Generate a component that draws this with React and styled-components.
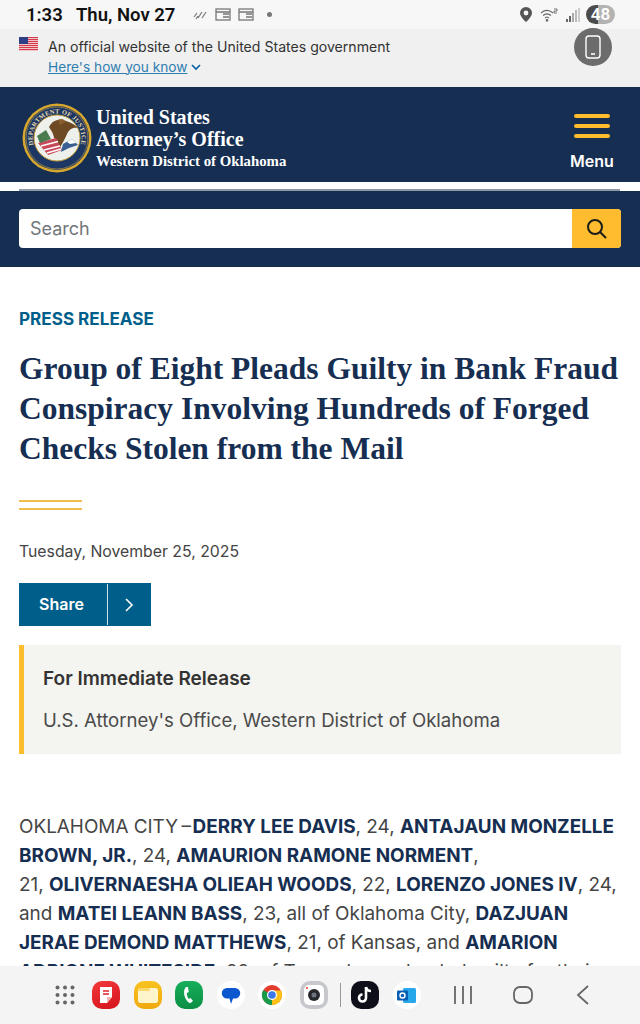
import React from "react";
import styled, { createGlobalStyle } from "styled-components";

const Global = createGlobalStyle`
  html, body { margin: 0; padding: 0; background: #fff; }
  body { width: 640px; height: 1024px; overflow: hidden; font-family: Inter, "Liberation Sans", sans-serif; }
  * { box-sizing: border-box; }
`;
const Page = styled.div`position: relative; width: 640px; height: 1024px; overflow: hidden; background: #fff;`;

const StatusBar = styled.div`
  height: 29px; background: #f7f7f7; display: flex; align-items: center; padding: 0 25px 0 26px; color: #111;
  font-family: Roboto, Inter, sans-serif; font-weight: 600; font-size: 18.5px;
`;
const StatusTime = styled.span`width: 50px;`;
const StatusDate = styled.span`width: 117px;`;
const StatusIcons = styled.div`display: flex; align-items: center; gap: 7px; color: #777;`;
const Spacer = styled.div`flex: 1;`;
const Battery = styled.div`
  width: 29px; height: 19px; border-radius: 10px; background: linear-gradient(90deg, #4b4b4b 0 40%, #b3b3b3 40% 100%);
  color: #fff; font-size: 17px; font-weight: 600; text-align: center; line-height: 19px;
`;
const StatusRight = styled.div`display: flex; align-items: center; gap: 6px;`;

const GovBanner = styled.div`
  height: 58px; background: #f0f0f0; display: flex; padding: 7px 0 0 19px; gap: 10px;
  font-family: Inter, sans-serif; font-size: 14.1px; color: #333; line-height: 22px;
`;
const GovText = styled.div`display: flex; flex-direction: column;`;
const GovLink = styled.a`color: #2f7fb0; font-size: 13.7px; line-height: 19px; text-decoration: underline; display: flex; align-items: center; gap: 4px; text-decoration-thickness: 1px;`;
const Floating = styled.div`
  position: absolute; left: 574px; top: 28px; width: 38px; height: 38px; border-radius: 50%; background: #6c6c6c;
  display: flex; align-items: center; justify-content: center;
`;

const Header = styled.header`height: 95px; background: #162e51; display: flex; align-items: center; padding: 7px 26px 0 22px; color: #fff;`;
const Brand = styled.div`display: flex; align-items: center; gap: 4px; flex: 1;`;
const BrandText = styled.div`font-family: "Liberation Serif", serif; font-weight: 700; display: flex; flex-direction: column; padding-top: 2px;`;
const BrandTitle = styled.div`font-size: 20px; line-height: 22px; white-space: nowrap;`;
const BrandSub = styled.div`font-size: 14.8px; line-height: 22px; white-space: nowrap;`;
const MenuBtn = styled.div`display: flex; flex-direction: column; align-items: center; gap: 14px; padding-top: 8px; width: 44px;`;
const MenuBars = styled.div`display: flex; flex-direction: column; gap: 6px; width: 36px;`;
const MenuBar = styled.span`display: block; height: 4px; border-radius: 2px; background: #ffbc2e;`;
const MenuLabel = styled.span`font-size: 16px; font-weight: 600; line-height: 18px;`;

const Divider = styled.div`height: 9px; background: #fff; padding: 7px 20px 0 19px;`;
const DividerLine = styled.div`height: 2px; background: #8f98a6;`;

const SearchBand = styled.div`height: 76px; background: #162e51; padding: 18px 19px 0;`;
const SearchBox = styled.div`display: flex; height: 39px; border-radius: 4px; overflow: hidden; background: #fff;`;
const SearchInput = styled.div`flex: 1; padding-left: 11px; font-size: 18px; line-height: 39px; color: #71767a;`;
const SearchBtn = styled.div`width: 49px; background: #ffbc2e; display: flex; align-items: center; justify-content: center;`;

const Main = styled.main`padding: 42px 19px 0;`;
const Eyebrow = styled.div`font-size: 17.1px; font-weight: 700; line-height: 20px; color: #005f8a;`;
const Title = styled.h1`
  margin: 20px 0 0; font-family: "Liberation Serif", serif; font-weight: 700; font-size: 31.5px; line-height: 40px; color: #162e51;
  white-space: nowrap;
`;
const Rule = styled.div`margin-top: 31px; width: 63px; height: 10px; border-top: 2px solid #f2bd50; border-bottom: 2px solid #f2bd50;`;
const DateLine = styled.div`margin-top: 32px; font-size: 15.8px; line-height: 20px; color: #444;`;
const Share = styled.div`margin-top: 21px; width: 132px; height: 43px; background: #005f8a; display: flex; align-items: center; color: #fff;`;
const ShareLabel = styled.div`width: 89px; height: 41px; border-right: 1px solid #cfe0ea; font-size: 16px; font-weight: 600; line-height: 41px; padding-left: 20px;`;
const ShareIcon = styled.div`flex: 1; display: flex; align-items: center; justify-content: center;`;
const Notice = styled.div`
  margin-top: 19px; height: 109px; background: #f4f4f0; border-left: 5px solid #ffbc2e; padding: 22px 0 0 19px; color: #333;
`;
const NoticeTitle = styled.div`font-size: 19px; font-weight: 600; line-height: 24px;`;
const NoticeBody = styled.div`margin-top: 17px; font-size: 18.6px; line-height: 24px; color: #4a4a4a;`;
const Article = styled.p`
  margin: 58px 0 0; font-size: 18.9px; line-height: 29px; color: #454545; white-space: nowrap;
`;
const Name = styled.strong`color: #162e51; font-weight: 700;`;

const Dock = styled.nav`
  position: absolute; left: 0; right: 0; bottom: 0; height: 58px; background: #f4f4f4; display: flex; align-items: center;
  padding: 0 0 0 55px;
`;
const DockApp = styled.div`
  width: 28px; height: 28px; margin-right: 13.6px; border-radius: ${p => (p.$round ? "50%" : "10px")}; background: ${p => p.$bg};
  display: flex; align-items: center; justify-content: center; flex-shrink: 0;
`;
const DockSep = styled.div`width: 1.5px; height: 24px; background: #999; margin: 0 10px 0 -2px; flex-shrink: 0;`;
const NavButtons = styled.div`display: flex; align-items: center; margin-left: 20px; gap: 41px;`;

const Seal = () => (
  <svg width="70" height="70" viewBox="0 0 70 70">
    <defs>
      <path id="sealTop" d="M11.500 42 A24.500 24.500 0 1 1 58.500 42" />
      <path id="sealBottom" d="M15 44 A22 22 0 0 0 55 44" />
    </defs>
    <circle cx="35" cy="35" r="34.500" fill="#d7a72e" />
    <circle cx="35" cy="35" r="32" fill="#1c3764" />
    <circle cx="35" cy="35" r="23" fill="#eef0ec" stroke="#c9a23c" strokeWidth="1" />
    <circle cx="35" cy="35" r="31" fill="none" stroke="#c9a23c" strokeWidth=".6" />
    <text fontFamily="Liberation Serif, serif" fontSize="6.500" fontWeight="700" fill="#e9dcae">
      <textPath href="#sealTop" textLength="90">DEPARTMENT OF JUSTICE</textPath>
    </text>
    <path d="M27 24 C30 17 38 15 44 18 C50 20 54 22 56 25 C50 24 47 27 45 31 C43 36 40 41 38 44 C35 41 32 36 31 31 C30 28 28 26 27 24 Z" fill="#6e4a24" />
    <path d="M36 17 C39 15 43 16 43 19 L38 22 Z" fill="#8a5f2f" />
    <path d="M16 40 L34 35 L40 47 L26 52 Z" fill="#c64a5a" />
    <path d="M19 43 L36 38.500 M22 47 L38 43 M25 50 L39 46" stroke="#fff" strokeWidth="1.400" />
    <path d="M15 33 L24 27 L29 36 L18 40 Z" fill="#4a7c50" />
    <path d="M41 41 L50 36 L56 42 L47 45 L39 49 Z" fill="#3a5f93" />
    <path d="M45 39 L50 36 L54 40 L48 41 Z" fill="#fff" />
  </svg>
);

const Flag = () => (
  <svg width="19" height="14" viewBox="0 0 19 14" style={{ marginTop: 1 }}>
    <rect width="19" height="14" fill="#fff" />
    {[0, 2, 4, 6, 8, 10, 12].map(y => <rect key={y} y={y} width="19" height="1.300" fill="#d43c4c" />)}
    <rect width="9" height="7" fill="#2f3f85" />
  </svg>
);

const ArticleBody = () => (
  <Article>
    OKLAHOMA CITY&#8201;–&#8202;<Name>DERRY LEE DAVIS</Name>, 24, <Name>ANTAJAUN MONZELLE</Name><br />
    <Name>BROWN, JR.</Name>, 24, <Name>AMAURION RAMONE NORMENT</Name>,<br />
    21, <Name>OLIVERNAESHA OLIEAH WOODS</Name>, 22, <Name>LORENZO JONES IV</Name>, 24,<br />
    and <Name>MATEI LEANN BASS</Name>, 23, all of Oklahoma City, <Name>DAZJUAN</Name><br />
    <Name>JERAE DEMOND MATTHEWS</Name>, 21, of Kansas, and <Name>AMARION</Name><br />
    <Name>ADRIONE WHITESIDE</Name>, 22, of Texas, have pleaded guilty for their
  </Article>
);

export default function App() {
  return (
    <Page>
      <Global />
      <StatusBar>
        <StatusTime>1:33</StatusTime>
        <StatusDate>Thu, Nov 27</StatusDate>
        <StatusIcons>
          <svg width="15" height="10" viewBox="0 0 15 10" fill="none" stroke="#777" strokeWidth="1.200"><path d="M1 7l3-4M5 8l4-6M9 8l4-6M3 9l2-3" /></svg>
          <svg width="16" height="13" viewBox="0 0 16 13" fill="none" stroke="#777" strokeWidth="1.300"><rect x="1" y="1" width="14" height="11" /><path d="M1 4h14M8 6h6M8 9h6" /></svg>
          <svg width="16" height="13" viewBox="0 0 16 13" fill="none" stroke="#777" strokeWidth="1.300"><rect x="1" y="1" width="14" height="11" /><path d="M1 4h14M8 6h6M8 9h6" /></svg>
          <svg width="5" height="5" style={{ marginLeft: 6 }}><circle cx="2.500" cy="2.500" r="2.500" fill="#777" /></svg>
        </StatusIcons>
        <Spacer />
        <StatusRight>
          <svg width="12" height="15" viewBox="0 0 12 15"><path fillRule="evenodd" d="M6 0a6 6 0 0 1 6 6c0 4-6 9-6 9S0 10 0 6a6 6 0 0 1 6-6zm0 3.600a2.400 2.400 0 1 0 0 4.800 2.400 2.400 0 0 0 0-4.800z" fill="#555" /></svg>
          <svg width="17" height="14" viewBox="0 0 17 14" fill="none" stroke="#666" strokeWidth="1.100" style={{ marginLeft: 3 }}><path d="M0 5c4-3.500 8-3.500 12 0M2 7.500c3-2.500 5-2.500 8 0M4 10c2-1.400 2-1.400 4 0" /><circle cx="6" cy="12.300" r=".8" fill="#666" /><path d="M13 1h3v2h-3v2h3" strokeWidth=".9" /></svg>
          <svg width="14" height="14" viewBox="0 0 14 14" style={{ marginLeft: 2 }}><rect x="0" y="11" width="2" height="3" fill="#666" /><rect x="3" y="8" width="2" height="6" fill="#666" /><rect x="6" y="5" width="2" height="9" fill="#aaa" /><rect x="9" y="2" width="2" height="12" fill="#bbb" /><rect x="12" y="0" width="2" height="14" fill="#ccc" /></svg>
          <Battery>48</Battery>
        </StatusRight>
      </StatusBar>
      <GovBanner>
        <Flag />
        <GovText>
          <span>An official website of the United States government</span>
          <GovLink>Here's how you know
            <svg width="10" height="7" viewBox="0 0 10 7" fill="none" stroke="#005ea2" strokeWidth="1.600"><path d="M1 1l4 4 4-4" /></svg>
          </GovLink>
        </GovText>
      </GovBanner>
      <Floating>
        <svg width="16" height="24" viewBox="0 0 16 24" fill="none" stroke="#fff" strokeWidth="1.400"><rect x="1" y="1" width="14" height="22" rx="3" /><path d="M6 19h4" strokeWidth="1.600" /></svg>
      </Floating>
      <Header>
        <Brand>
          <Seal />
          <BrandText>
            <BrandTitle>United States</BrandTitle>
            <BrandTitle>Attorney’s Office</BrandTitle>
            <BrandSub>Western District of Oklahoma</BrandSub>
          </BrandText>
        </Brand>
        <MenuBtn>
          <MenuBars><MenuBar /><MenuBar /><MenuBar /></MenuBars>
          <MenuLabel>Menu</MenuLabel>
        </MenuBtn>
      </Header>
      <Divider><DividerLine /></Divider>
      <SearchBand>
        <SearchBox>
          <SearchInput>Search</SearchInput>
          <SearchBtn>
            <svg width="21" height="21" viewBox="0 0 21 21" fill="none" stroke="#1b1b1b" strokeWidth="2"><circle cx="9" cy="9" r="7" /><path d="M14 14l6 6" /></svg>
          </SearchBtn>
        </SearchBox>
      </SearchBand>
      <Main>
        <Eyebrow>PRESS RELEASE</Eyebrow>
        <Title>Group of Eight Pleads Guilty in Bank Fraud<br />Conspiracy Involving Hundreds of Forged<br />Checks Stolen from the Mail</Title>
        <Rule />
        <DateLine>Tuesday, November 25, 2025</DateLine>
        <Share>
          <ShareLabel>Share</ShareLabel>
          <ShareIcon>
            <svg width="9" height="14" viewBox="0 0 9 14" fill="none" stroke="#fff" strokeWidth="1.600"><path d="M1 1l6 6-6 6" /></svg>
          </ShareIcon>
        </Share>
        <Notice>
          <NoticeTitle>For Immediate Release</NoticeTitle>
          <NoticeBody>U.S. Attorney's Office, Western District of Oklahoma</NoticeBody>
        </Notice>
        <ArticleBody />
      </Main>
      <Dock>
        <svg width="20" height="20" viewBox="0 0 24 24" fill="#666" style={{ marginRight: 17 }}>
          {[3, 12, 21].flatMap(y => [3, 12, 21].map(x => <circle key={`${x}-${y}`} cx={x} cy={y} r="2.400" />))}
        </svg>
        <DockApp $bg="linear-gradient(160deg, #f23a3a, #d4121c)">
          <svg width="16" height="18" viewBox="0 0 16 18"><path d="M2 1h12v10l-5 6H2z" fill="#fff" /><path d="M9 17v-6h5z" fill="#f6b5b5" /><path d="M5 5h6M5 8h6" stroke="#e3222b" strokeWidth="1.400" /></svg>
        </DockApp>
        <DockApp $bg="linear-gradient(180deg, #f8c21f, #f0a90e)">
          <svg width="20" height="15" viewBox="0 0 20 15"><rect width="20" height="15" rx="2.500" fill="#fff5cc" /><rect y="0" width="12" height="3" rx="1.500" fill="#f9d768" /></svg>
        </DockApp>
        <DockApp $bg="linear-gradient(180deg, #17ae5a, #0b8f44)">
          <svg width="12" height="18" viewBox="0 0 12 18"><path d="M3 1c-2 2-2.500 5-1.500 9 1 3 3 6 5 7 1 .4 3-1 3.400-2.200l-2.400-2.800-1.700 1c-1.300-1.500-2-4-2-6l2-1L5 1z" fill="#fff" /></svg>
        </DockApp>
        <DockApp $bg="#fff" $round>
          <svg width="20" height="19" viewBox="0 0 20 19"><path d="M6 2h8a5 5 0 0 1 0 10.500h-2L10 18l-1.500-5.500H6A5 5 0 0 1 6 2z" fill="#0b57d0" /></svg>
        </DockApp>
        <DockApp $bg="#fff" $round>
          <svg width="22" height="22" viewBox="0 0 22 22"><circle cx="11" cy="11" r="10" fill="#e33b2e" /><path d="M11 11L2.300 6A10 10 0 0 0 11 21z" fill="#189a4a" /><path d="M11 11V21A10 10 0 0 0 20 6.500H11z" fill="#fbc116" /><circle cx="11" cy="11" r="5" fill="#fff" /><circle cx="11" cy="11" r="3.800" fill="#3b78e7" /></svg>
        </DockApp>
        <DockApp $bg="#c6c8cc">
          <svg width="20" height="20" viewBox="0 0 20 20"><rect width="20" height="20" rx="5" fill="#fff" /><circle cx="10" cy="10" r="6" fill="#26282c" /><circle cx="10" cy="10" r="2.500" fill="#6d7480" /><circle cx="3" cy="3" r="1" fill="#e33" /></svg>
        </DockApp>
        <DockSep />
        <DockApp $bg="#0f0f1a">
          <svg width="16" height="18" viewBox="0 0 16 18" fill="none"><path d="M9 1v11a3.500 3.500 0 1 1-3.500-3.500M9 1c.5 2.500 2.500 4 5 4" stroke="#fff" strokeWidth="2.600" /></svg>
        </DockApp>
        <DockApp $bg="#fff" $round>
          <svg width="20" height="17" viewBox="0 0 20 17"><rect x="6" y="1" width="13" height="15" rx="1.500" fill="#28a8ea" /><rect x="0" y="3.500" width="11" height="10" rx="1" fill="#0a5fb4" /><circle cx="5.500" cy="8.500" r="2.500" fill="none" stroke="#fff" strokeWidth="1.400" /></svg>
        </DockApp>
        <NavButtons>
          <svg width="18" height="18" viewBox="0 0 18 18" stroke="#666" strokeWidth="1.800"><path d="M1 0v18M9 0v18M17 0v18" /></svg>
          <svg width="20" height="18" viewBox="0 0 20 18" fill="none" stroke="#666" strokeWidth="1.800"><rect x="1" y="1" width="18" height="16" rx="6" /></svg>
          <svg width="14" height="20" viewBox="0 0 14 20" fill="none" stroke="#666" strokeWidth="1.800" style={{ marginLeft: 2 }}><path d="M12 1L2 10l10 9" /></svg>
        </NavButtons>
      </Dock>
    </Page>
  );
}
